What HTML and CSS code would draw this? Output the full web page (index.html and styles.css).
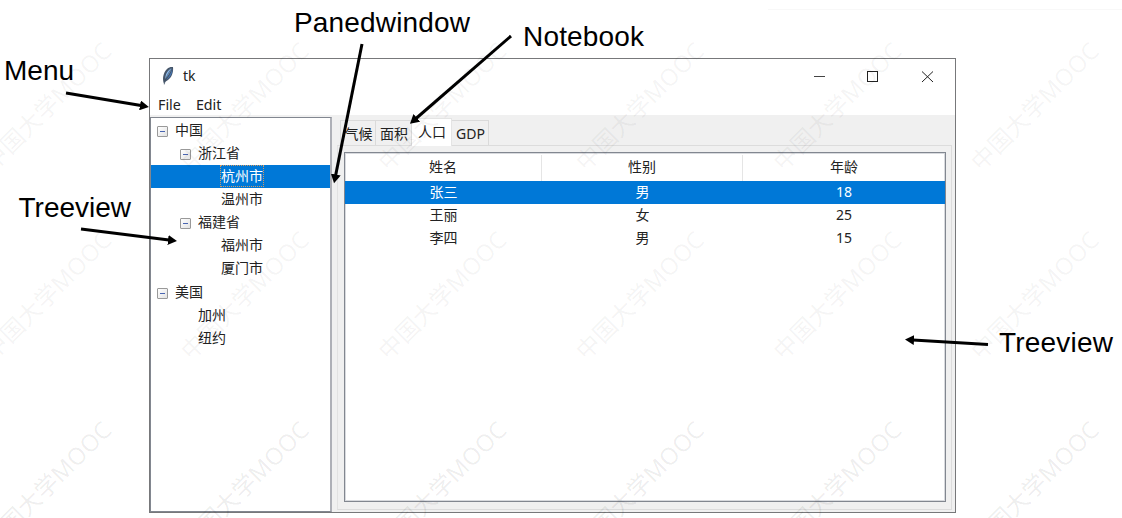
FILE: index.html
```html
<!DOCTYPE html>
<html lang="zh-CN">
<head>
<meta charset="utf-8">
<title>tk</title>
<link rel="stylesheet" href="styles.css">
</head>
<body>
<main class="window">
  <header class="titlebar">
    <svg class="feather" width="14" height="20" viewBox="0 0 14 20">
      <path d="M3 18C1 13 2 7 6 3C8 1 10 .7 12 1C12.6 6 11 11 7 14L4 16Z" fill="#46566a"/>
      <path d="M4.400 13C4 9 6 4.500 11 2C9 6 7 10 4.400 13Z" fill="#8ebcee"/>
      <path d="M5.500 13.500C8 10.500 10 7 11.300 3C11.500 7 9.500 11.500 5.500 13.500Z" fill="#4476b8"/>
      <path d="M3.300 18.500C4 13 7 7 11 2" fill="none" stroke="#34465c" stroke-width=".6"/>
    </svg>
    <span class="title">tk</span>
    <svg class="controls" width="122" height="14" viewBox="0 0 122 14">
      <path d="M1 7.500H12" stroke="#444" fill="none"/>
      <rect x="54.500" y="2.500" width="10" height="10" stroke="#222" fill="none"/>
      <path d="M109 2.500L120 13M120 2.500L109 13" stroke="#222" fill="none"/>
    </svg>
  </header>
  <nav class="menu"><span>File</span><span>Edit</span></nav>
  <div class="panes">
    <ul class="tree">
      <li><i class="toggle"></i>中国</li>
      <li class="lv1"><i class="toggle"></i>浙江省</li>
      <li class="lv2 selected"><span class="focus">杭州市</span></li>
      <li class="lv2">温州市</li>
      <li class="lv1"><i class="toggle"></i>福建省</li>
      <li class="lv2">福州市</li>
      <li class="lv2">厦门市</li>
      <li><i class="toggle"></i>美国</li>
      <li class="leaf">加州</li>
      <li class="leaf">纽约</li>
    </ul>
    <section class="notebook">
      <div class="tabs">
        <span class="tab">气候</span><span class="tab">面积</span><span class="tab active">人口</span><span class="tab">GDP</span>
      </div>
      <div class="page">
        <div class="grid">
          <div class="row head"><span>姓名</span><span>性别</span><span>年龄</span></div>
          <div class="row selected"><span>张三</span><span>男</span><span>18</span></div>
          <div class="row"><span>王丽</span><span>女</span><span>25</span></div>
          <div class="row"><span>李四</span><span>男</span><span>15</span></div>
        </div>
      </div>
    </section>
  </div>
</main>
<svg class="overlay" width="1122" height="518" viewBox="0 0 1122 518">
  <defs>
    <text id="mark" class="mark" transform="rotate(-45)" x="-86" y="9" textLength="169">中国大学MOOC</text>
    <g id="marks">
      <use href="#mark" x="48"/><use href="#mark" x="245.500"/><use href="#mark" x="443"/>
      <use href="#mark" x="640.500"/><use href="#mark" x="838"/><use href="#mark" x="1035.500"/>
    </g>
    <marker id="head" markerUnits="userSpaceOnUse" markerWidth="10" markerHeight="10" refX="1" refY="5" orient="auto"><path d="M0 0L9 5L0 10Z"/></marker>
  </defs>
  <use href="#marks" y="105" opacity=".6"/>
  <use href="#marks" y="294" opacity=".6"/>
  <use href="#marks" y="484"/>
  <path d="M768 9.500H1122" stroke="#f8f8f8"/>
  <g class="arrows">
    <path d="M66 93L141 105.600"/>
    <path d="M81 229L169 240.100"/>
    <path d="M362 44L335.600 175.500"/>
    <path d="M511 36L416 118.500"/>
    <path d="M988 344.500L913 340"/>
  </g>
  <g class="labels">
    <text x="4" y="80">Menu</text>
    <text x="18.500" y="217">Treeview</text>
    <text x="294" y="32" textLength="176">Panedwindow</text>
    <text x="523" y="46" textLength="121">Notebook</text>
    <text x="999" y="352" textLength="114">Treeview</text>
  </g>
</svg>
</body>
</html>
```
FILE: styles.css
```css
* { box-sizing: border-box; }
body {
  margin: 0;
  height: 518px;
  overflow: hidden;
  background: #fff;
  color: #222;
  font: 14px/20px "Noto Sans", "Noto Sans CJK SC", sans-serif;
}
.window {
  display: flex;
  flex-direction: column;
  width: 807px;
  height: 455px;
  margin: 58px 0 0 149px;
  border: 1px solid #77787a;
  background: #fff;
}
.titlebar { display: flex; align-items: center; height: 34px; padding: 0 20px 0 11px; }
.title { margin-left: 8px; }
.controls { margin-left: auto; }
.menu { display: flex; gap: 15px; height: 22px; padding: 2px 8px; font-size: 14.300px; }
.panes { display: flex; flex: 1; min-height: 0; background: #f0f0f0; padding-top: 2px; }
.tree {
  width: 182px;
  margin: 0;
  padding: 1px 0 0;
  list-style: none;
  border: 1px solid #828790;
  border-right: 2px solid #aeb0b7;
  background: #fff;
}
.tree li { display: flex; align-items: center; height: 23.150px; padding: 0 0 2px 6px; }
.tree .lv1 { padding-left: 29px; }
.tree .leaf { padding-left: 47px; }
.tree .lv2 { padding-left: 70px; }
.toggle {
  position: relative;
  width: 11px;
  height: 11px;
  margin: 3px 7px 0 0;
  border: 1px solid #999;
  border-radius: 1px;
  background: linear-gradient(135deg, #fff, #e2e2e2);
}
.toggle::after {
  content: "";
  position: absolute;
  left: 2px;
  top: 4px;
  width: 5px;
  height: 1px;
  background: #4965b1;
}
.selected { background: #0078d7; color: #fff; }
.focus { outline: 1px dotted #d49a62; }
.notebook { display: flex; flex: 1; flex-direction: column; padding: 1px 3px 2px 5px; }
.tabs { display: flex; align-items: flex-end; height: 27px; padding-left: 3px; }
.tab {
  height: 25px;
  width: 36px;
  padding: 3px 0 0 1px;
  text-align: center;
  border: 1px solid #dadada;
  border-width: 1px 1px 0 0;
}
.tab:first-child { border-left-width: 1px; }
.tab:last-child { width: 37px; }
.tab.active {
  z-index: 1;
  width: 40px;
  height: 28px;
  margin-bottom: -1px;
  border-color: #e4e4e4;
  background: #fff;
}
.page { flex: 1; padding: 6px 5px 7px 6px; border: 1px solid #dcdcdc; border-left-color: #e2e2e2; }
.grid { height: 100%; border: 1px solid #828790; box-shadow: inset 0 0 0 1px #d8dade; background: #fff; }
.row { display: grid; grid-template-columns: 197px 201px 1fr; height: 23.200px; align-items: center; padding-bottom: 2px; text-align: center; }
.row.head { height: 28px; padding: 0; }
.head span { height: 26px; margin-top: 1px; padding-top: 2px; border-right: 1px solid #e5e5e5; }
.head span:last-child { border: 0; }
.overlay { position: absolute; left: 0; top: 0; z-index: 2; }
.mark { font: 400 23.500px "Open Sans", "Noto Sans CJK SC", sans-serif; fill: #000; fill-opacity: .08; }
.arrows { fill: none; stroke: #000; stroke-width: 3; }
.arrows path { marker-end: url(#head); }
#head path { fill: #000; stroke: none; }
.labels { font: 28px "Liberation Sans", Arial, sans-serif; fill: #000; }
```
